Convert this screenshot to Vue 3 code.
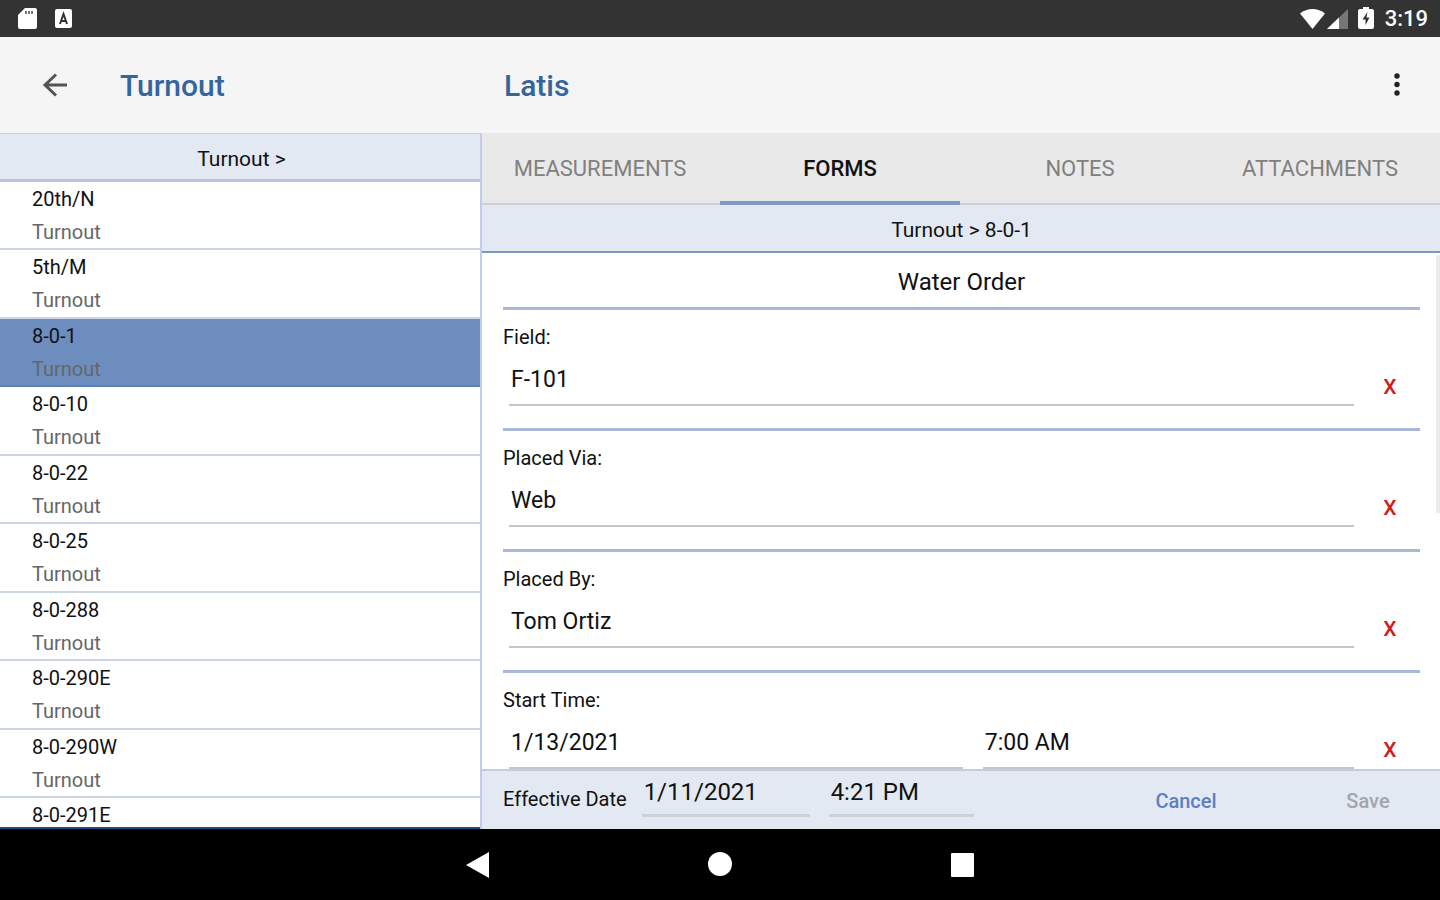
<template>
  <div class="screen">
    <div class="status-bar">
      <div class="status-icons">
        <svg width="24" height="24" viewBox="0 0 24 24">
          <path d="M9 1h10a2 2 0 0 1 2 2v17a2 2 0 0 1-2 2H4a2 2 0 0 1-2-2V8z" fill="#fff" />
          <path d="M10 4v3M13 4v3M16 4v3" stroke="#777" stroke-width="2" />
        </svg>
        <svg width="24" height="24" viewBox="0 0 24 24">
          <rect x="3" y="2" width="17" height="19" rx="2" fill="#fff" />
          <path d="M8 17l3.500-10L15 17M9.500 14h4" fill="none" stroke="#333" stroke-width="2" />
        </svg>
      </div>
      <div class="status-icons right">
        <svg width="28" height="24" viewBox="0 0 28 24">
          <path d="M13.500 22L1 6.500C8 .5 19 .5 26 6.500z" fill="#fff" />
        </svg>
        <svg width="24" height="24" viewBox="0 0 24 24">
          <path d="M0 22L21 2v20z" fill="#777" />
          <path d="M0 22L12 10.500V22z" fill="#fff" />
        </svg>
        <svg class="battery" width="18" height="24" viewBox="0 0 18 24">
          <path d="M6 0h6v2h3a2 2 0 0 1 2 2v16a2 2 0 0 1-2 2H3a2 2 0 0 1-2-2V4a2 2 0 0 1 2-2h3z" fill="#fff" />
          <path d="M10.500 5L5.500 12.500H8.500V18l4-7.500H9.500z" fill="#333" />
        </svg>
        <span class="clock">3:19</span>
      </div>
    </div>

    <header class="app-bar">
      <div class="bar-left">
        <button class="icon-button back" aria-label="Back">
          <svg width="26" height="26" viewBox="0 0 26 26">
            <path d="M25 13H3M14 2.500L3 13l11 10.500" fill="none" stroke="#555" stroke-width="3" />
          </svg>
        </button>
        <h1 class="title">Turnout</h1>
      </div>
      <div class="bar-right">
        <h1 class="title">Latis</h1>
        <button class="icon-button" aria-label="More options">
          <svg width="8" height="26" viewBox="0 0 8 26">
            <circle cx="4" cy="4" r="2.700" fill="#222" />
            <circle cx="4" cy="12.500" r="2.700" fill="#222" />
            <circle cx="4" cy="21" r="2.700" fill="#222" />
          </svg>
        </button>
      </div>
    </header>

    <main class="panes">
      <aside class="list-pane">
        <div class="crumb list-crumb">Turnout &gt;</div>
        <ul class="list">
          <li v-for="item in items" :key="item.name" class="row">
            <button
              class="row-button"
              :class="{ selected: item.name === selectedItem }"
              @click="selectedItem = item.name"
            >
              <span class="row-name">{{ item.name }}</span>
              <span v-if="item.type" class="row-type">{{ item.type }}</span>
            </button>
          </li>
        </ul>
      </aside>

      <section class="detail-pane">
        <nav class="tabs">
          <button
            v-for="tab in tabs"
            :key="tab"
            class="tab"
            :class="{ active: tab === activeTab }"
            @click="activeTab = tab"
          >
            {{ tab }}
          </button>
        </nav>
        <div class="crumb detail-crumb">Turnout &gt; {{ selectedItem }}</div>

        <div class="form-wrap">
          <form class="form" @submit.prevent>
            <h2 class="form-title">Water Order</h2>
            <div v-for="field in fields" :key="field.id" class="field">
              <label class="label" :for="field.id">{{ field.label }}</label>
              <div class="field-line">
                <div class="inputs" :class="{ split: field.time }">
                  <input :id="field.id" v-model="field.value" type="text" class="input" />
                  <input
                    v-if="field.time"
                    v-model="field.time"
                    type="text"
                    class="input"
                    aria-label="Start Time hour"
                  />
                </div>
                <button type="button" class="clear" @click="field.value = ''">X</button>
              </div>
            </div>
          </form>
          <div class="scroll-thumb"></div>
        </div>

        <footer class="footer">
          <label class="label" for="effective-date">Effective Date</label>
          <input id="effective-date" v-model="effectiveDate" type="text" class="input date" />
          <input v-model="effectiveTime" type="text" class="input time" aria-label="Effective time" />
          <button class="action cancel">Cancel</button>
          <button class="action save" disabled>Save</button>
        </footer>
      </section>
    </main>

    <div class="nav-bar">
      <button class="nav-button" aria-label="Back">
        <svg width="26" height="28" viewBox="0 0 26 28"><path d="M1 14L24 1v26z" fill="#fff" /></svg>
      </button>
      <button class="nav-button" aria-label="Home">
        <svg width="26" height="28" viewBox="0 0 26 28"><circle cx="13" cy="13" r="12" fill="#fff" /></svg>
      </button>
      <button class="nav-button" aria-label="Recent apps">
        <svg width="26" height="28" viewBox="0 0 26 28"><rect x="2" y="2" width="23" height="24" rx="1" fill="#fff" /></svg>
      </button>
    </div>
  </div>
</template>

<script setup>
import { ref } from "vue";

const items = [
  { name: "20th/N", type: "Turnout" },
  { name: "5th/M", type: "Turnout" },
  { name: "8-0-1", type: "Turnout" },
  { name: "8-0-10", type: "Turnout" },
  { name: "8-0-22", type: "Turnout" },
  { name: "8-0-25", type: "Turnout" },
  { name: "8-0-288", type: "Turnout" },
  { name: "8-0-290E", type: "Turnout" },
  { name: "8-0-290W", type: "Turnout" },
  { name: "8-0-291E" },
];
const selectedItem = ref("8-0-1");

const tabs = ["MEASUREMENTS", "FORMS", "NOTES", "ATTACHMENTS"];
const activeTab = ref("FORMS");

const fields = ref([
  { id: "field", label: "Field:", value: "F-101" },
  { id: "placed-via", label: "Placed Via:", value: "Web" },
  { id: "placed-by", label: "Placed By:", value: "Tom Ortiz" },
  { id: "start-time", label: "Start Time:", value: "1/13/2021", time: "7:00 AM" },
]);

const effectiveDate = ref("1/11/2021");
const effectiveTime = ref("4:21 PM");
</script>

<style>
body {
  margin: 0;
}
</style>

<style scoped>
.screen {
  display: flex;
  flex-direction: column;
  height: 100vh;
  overflow: hidden;
  background-color: #fff;
  color: #111;
  font-family: Roboto, "Liberation Sans", sans-serif;
  font-size: 20px;
}

.screen * {
  box-sizing: border-box;
}

button {
  padding: 0;
  border: 0;
  background: none;
  color: inherit;
  font: inherit;
  cursor: pointer;
}

svg {
  display: block;
}

.status-bar {
  flex: none;
  display: flex;
  align-items: center;
  justify-content: space-between;
  height: 37px;
  padding: 0 12px 0 16px;
  background-color: #333;
  color: #fff;
}

.status-icons {
  display: flex;
  align-items: center;
  gap: 12px;
}

.status-icons.right {
  gap: 0;
}

.battery {
  margin: 0 10px 0 6px;
}

.clock {
  font-size: 22px;
  font-weight: 500;
}

.app-bar {
  flex: none;
  display: flex;
  height: 96px;
  background-color: #f5f5f5;
}

.bar-left,
.bar-right {
  display: flex;
  align-items: center;
}

.bar-left {
  width: calc(100% / 3);
  padding-left: 42px;
}

.bar-right {
  flex: 1;
  justify-content: space-between;
  padding: 0 39px 0 24px;
}

.back {
  margin-right: 52px;
}

.title {
  margin: 0;
  color: #34659d;
  font-size: 30px;
  font-weight: 500;
}

.panes {
  flex: 1;
  display: flex;
  min-height: 0;
}

.list-pane {
  display: flex;
  flex-direction: column;
  width: calc(100% / 3);
  border-bottom: 2px solid #1d4e80;
}

.crumb {
  flex: none;
  padding: 4px 0 0 3px;
  background-color: #e3e9f2;
  font-size: 21px;
  text-align: center;
}

.list-crumb {
  height: 49px;
  border-top: 1px solid #ccd0d8;
  border-bottom: 3px solid #bac3df;
  line-height: 42px;
}

.list {
  flex: 1;
  min-height: 0;
  margin: 0;
  padding: 0;
  overflow-y: auto;
  scrollbar-width: none;
  list-style: none;
}

.row {
  height: 68px;
}

.row:nth-child(even) {
  height: 69px;
}

.row-button {
  display: flex;
  flex-direction: column;
  width: 100%;
  height: 100%;
  padding: 1px 0 0 32px;
  border-bottom: 2px solid #ccd5e6;
  line-height: 33px;
  text-align: left;
}

.row-button.selected {
  border-color: #5d80b9;
  background-color: #6e8dbf;
}

.row-type {
  color: #666;
}

.detail-pane {
  position: relative;
  flex: 1;
  display: flex;
  flex-direction: column;
  min-width: 0;
}

/* divider between the two panes */
.detail-pane::before {
  content: "";
  position: absolute;
  top: 0;
  bottom: 0;
  left: 0;
  width: 2px;
  background-color: #c3cce6;
}

.tabs {
  flex: none;
  display: grid;
  grid-template-columns: repeat(4, 1fr);
  height: 72px;
  background-color: #e9e9e9;
}

.tab {
  border-bottom: 2px solid #cfd0d2;
  color: #808080;
  font-size: 22px;
}

.tab.active {
  padding-top: 2px;
  border-bottom: 4px solid #7f9aca;
  color: #111;
  font-weight: 500;
}

.detail-crumb {
  height: 48px;
  border-bottom: 2px solid #7e96c5;
  line-height: 43px;
}

.form-wrap {
  position: relative;
  flex: 1;
  min-height: 0;
}

.form {
  height: 100%;
  padding: 0 20px 0 23px;
  overflow-y: auto;
  scrollbar-width: none;
}

.scroll-thumb {
  position: absolute;
  top: 2px;
  right: 0;
  width: 4px;
  height: 50%;
  background-color: #ececec;
}

.form-title {
  margin: 0;
  padding-top: 4px;
  border-bottom: 3px solid #a9b8d9;
  font-size: 24px;
  font-weight: 400;
  line-height: 50px;
  text-align: center;
}

.field {
  padding: 15px 0 22px;
  border-bottom: 3px solid #a9b8d9;
}

.label {
  display: block;
  line-height: 24px;
}

.field-line {
  display: grid;
  grid-template-columns: 1fr 60px;
  gap: 6px;
  padding-left: 6px;
}

.inputs {
  display: grid;
  gap: 20px;
}

.inputs.split {
  grid-template-columns: 11fr 9fr;
}

.input {
  width: 100%;
  min-width: 0;
  height: 57px;
  padding: 6px 2px 0;
  border: 0;
  border-bottom: 2px solid #c6c6c6;
  border-radius: 0;
  outline: 0;
  background: none;
  color: #111;
  font-family: inherit;
  font-size: 23px;
}

.input:focus {
  border-color: #6e8dbf;
}

.clear {
  padding-top: 18px;
  color: #d01c1c;
  font-size: 21px;
  font-weight: 500;
}

.footer {
  flex: none;
  display: flex;
  height: 60px;
  padding-left: 23px;
  border-top: 2px solid #c5cce2;
  background-color: #e3e9f2;
}

.footer .label {
  margin-right: 15px;
  line-height: 56px;
  white-space: nowrap;
}

.footer .input {
  height: 46px;
  margin-right: 19px;
  padding: 0 2px 2px;
  border-bottom: 3px solid #cdd1da;
  font-size: 24px;
}

.footer .date {
  width: 168px;
}

.footer .time {
  width: 145px;
}

.action {
  height: 100%;
  padding-top: 2px;
  font-weight: 500;
}

.cancel {
  width: 220px;
  margin-left: auto;
  color: #5b80c0;
}

.save {
  width: 144px;
  color: #a2a5ab;
}

.nav-bar {
  flex: none;
  display: flex;
  align-items: center;
  justify-content: center;
  gap: 216px;
  height: 71px;
  background-color: #000;
}
</style>
